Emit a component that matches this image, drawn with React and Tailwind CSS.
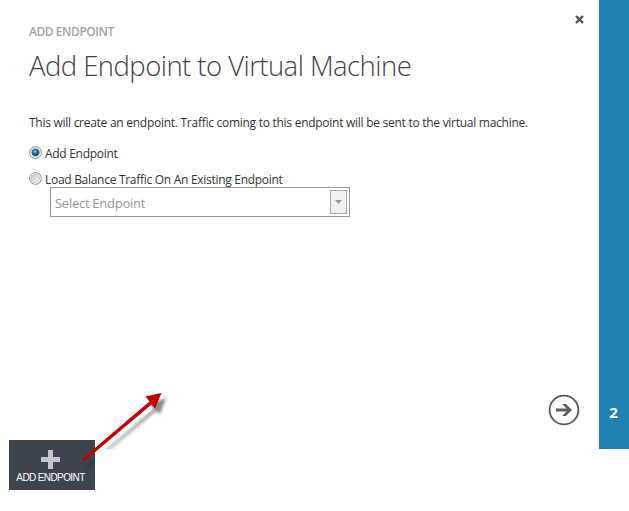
function Radio({ checked }) {
  return (
    <svg className="h-[13px] w-[13px] shrink-0" viewBox="0 0 13 13">
      <defs>
        <linearGradient id="ring" x1="0" y1="0" x2="1" y2="1">
          <stop offset="0" stopColor="#c4c8cc" />
          <stop offset="1" stopColor="#f4f4f4" />
        </linearGradient>
        <radialGradient id="dot" cx="0.4" cy="0.35" r="0.7">
          <stop offset="0" stopColor="#8fdcf8" />
          <stop offset="0.4" stopColor="#2289c2" />
          <stop offset="1" stopColor="#0b3660" />
        </radialGradient>
      </defs>
      <circle cx="6.5" cy="6.5" r="5.9" fill="#f6f6f6" stroke="#8e8f8f" />
      <circle cx="6.5" cy="6.5" r="4.2" fill="url(#ring)" stroke="#b4b8bc" strokeWidth="0.6" />
      {checked && <circle cx="6.5" cy="6.5" r="3.3" fill="url(#dot)" stroke="#123c60" strokeWidth="0.7" />}
    </svg>
  );
}

function Option({ checked, children }) {
  return (
    <div className="flex h-4 items-start">
      <Radio checked={checked} />
      <span className="ml-[3px] whitespace-nowrap text-[12px] leading-4 tracking-[-0.29px] text-[#333]">
        {children}
      </span>
    </div>
  );
}

function Dialog() {
  return (
    <main className="flex w-[599px] flex-col bg-white pl-[29px]">
      <div className="flex h-[24px] justify-end pr-[15px] pt-[15px]">
        <svg className="h-[9px] w-[9px]" viewBox="0 0 9 9">
          <path d="M1 1L8 8M8 1L1 8" stroke="#555" strokeWidth="2.4" />
        </svg>
      </div>
      <div className="h-4 text-[12px] font-semibold leading-4 tracking-[-0.45px] text-[#a3a3a3]">ADD ENDPOINT</div>
      <h1 className="mt-[6px] h-10 whitespace-nowrap text-[27.5px] font-light leading-10 tracking-[-0.55px] text-[#444]">
        Add Endpoint to Virtual Machine
      </h1>
      <p className="mt-[29px] h-4 whitespace-nowrap text-[12px] leading-4 tracking-[-0.27px] text-[#333]">
        This will create an endpoint. Traffic coming to this endpoint will be sent to the virtual machine.
      </p>
      <div className="mt-[15px] flex flex-col gap-[10px]">
        <Option checked>Add Endpoint</Option>
        <Option>Load Balance Traffic On An Existing Endpoint</Option>
      </div>
      <div className="-mt-px ml-[21px] flex h-[30px] w-[300px] shrink-0 items-center justify-between border border-[#999] pl-1 pr-[2px]">
        <span className="mt-[3px] text-[13px] tracking-[-0.27px] text-[#999]">Select Endpoint</span>
        <span className="flex h-6 w-[17px] items-center justify-center border border-[#aaa] bg-[#f1f1f1]">
          <svg className="h-1 w-[7px]" viewBox="0 0 7 4">
            <path d="M0 0H7L3.5 4Z" fill="#999" />
          </svg>
        </span>
      </div>
      <div className="mt-auto flex justify-end pb-[23px] pr-[19px]">
        <svg className="h-8 w-8" viewBox="0 0 32 32" fill="none">
          <circle cx="16" cy="16" r="14.4" stroke="#5a5a5a" strokeWidth="1.8" />
          <path d="M8 16H21" stroke="#5a5a5a" strokeWidth="3" />
          <path d="M14.2 10H17.9L24 16L17.9 22H14.2L20 16Z" fill="#5a5a5a" />
        </svg>
      </div>
    </main>
  );
}

export default function App() {
  return (
    <div className="relative h-[511px] w-[629px] overflow-hidden bg-white font-['Open_Sans','Noto_Sans',sans-serif]">
      <div className="flex h-[449px]">
        <Dialog />
        <aside className="flex w-[30px] items-end justify-center bg-[#1f82b0] pb-[27px] pr-px">
          <span className="text-[15px] font-bold leading-5 text-white">2</span>
        </aside>
      </div>
      <button className="absolute left-[9px] top-[440px] flex h-[50px] w-[86px] flex-col items-center bg-[#3d434f] pr-[3px] pt-[10px]">
        <svg className="h-[19px] w-[19px]" viewBox="0 0 19 19">
          <path d="M7 0H12V7H19V12H12V19H7V12H0V7H7Z" fill="#c3c7ca" />
        </svg>
        <span className="mt-[3px] whitespace-nowrap font-['Liberation_Sans',sans-serif] text-[10px] leading-3 tracking-[-0.6px] text-white">
          ADD ENDPOINT
        </span>
      </button>
      <svg className="absolute left-[70px] top-[380px] h-[90px] w-[110px]" viewBox="0 0 110 90">
        <defs>
          <filter id="soft" x="-20%" y="-20%" width="140%" height="140%">
            <feGaussianBlur stdDeviation="1.6" />
          </filter>
          <linearGradient id="fade" gradientUnits="userSpaceOnUse" x1="20" y1="82" x2="95" y2="18">
            <stop offset="0" stopColor="#000" stopOpacity="0.12" />
            <stop offset="1" stopColor="#000" stopOpacity="0.5" />
          </linearGradient>
          <clipPath id="above">
            <path d="M0 0H110V69H25V90H0Z" />
          </clipPath>
        </defs>
        <g clipPath="url(#above)">
          <path d="M16 85L84 29L80 24L96 18L90 34L86 31L18 89Z" fill="url(#fade)" filter="url(#soft)" />
        </g>
        <path d="M12 79L79.5 21.5L75.5 16.5L91.5 13L85 28.5L81.5 24.5L14 81.5Z" fill="#c00000" />
      </svg>
    </div>
  );
}
